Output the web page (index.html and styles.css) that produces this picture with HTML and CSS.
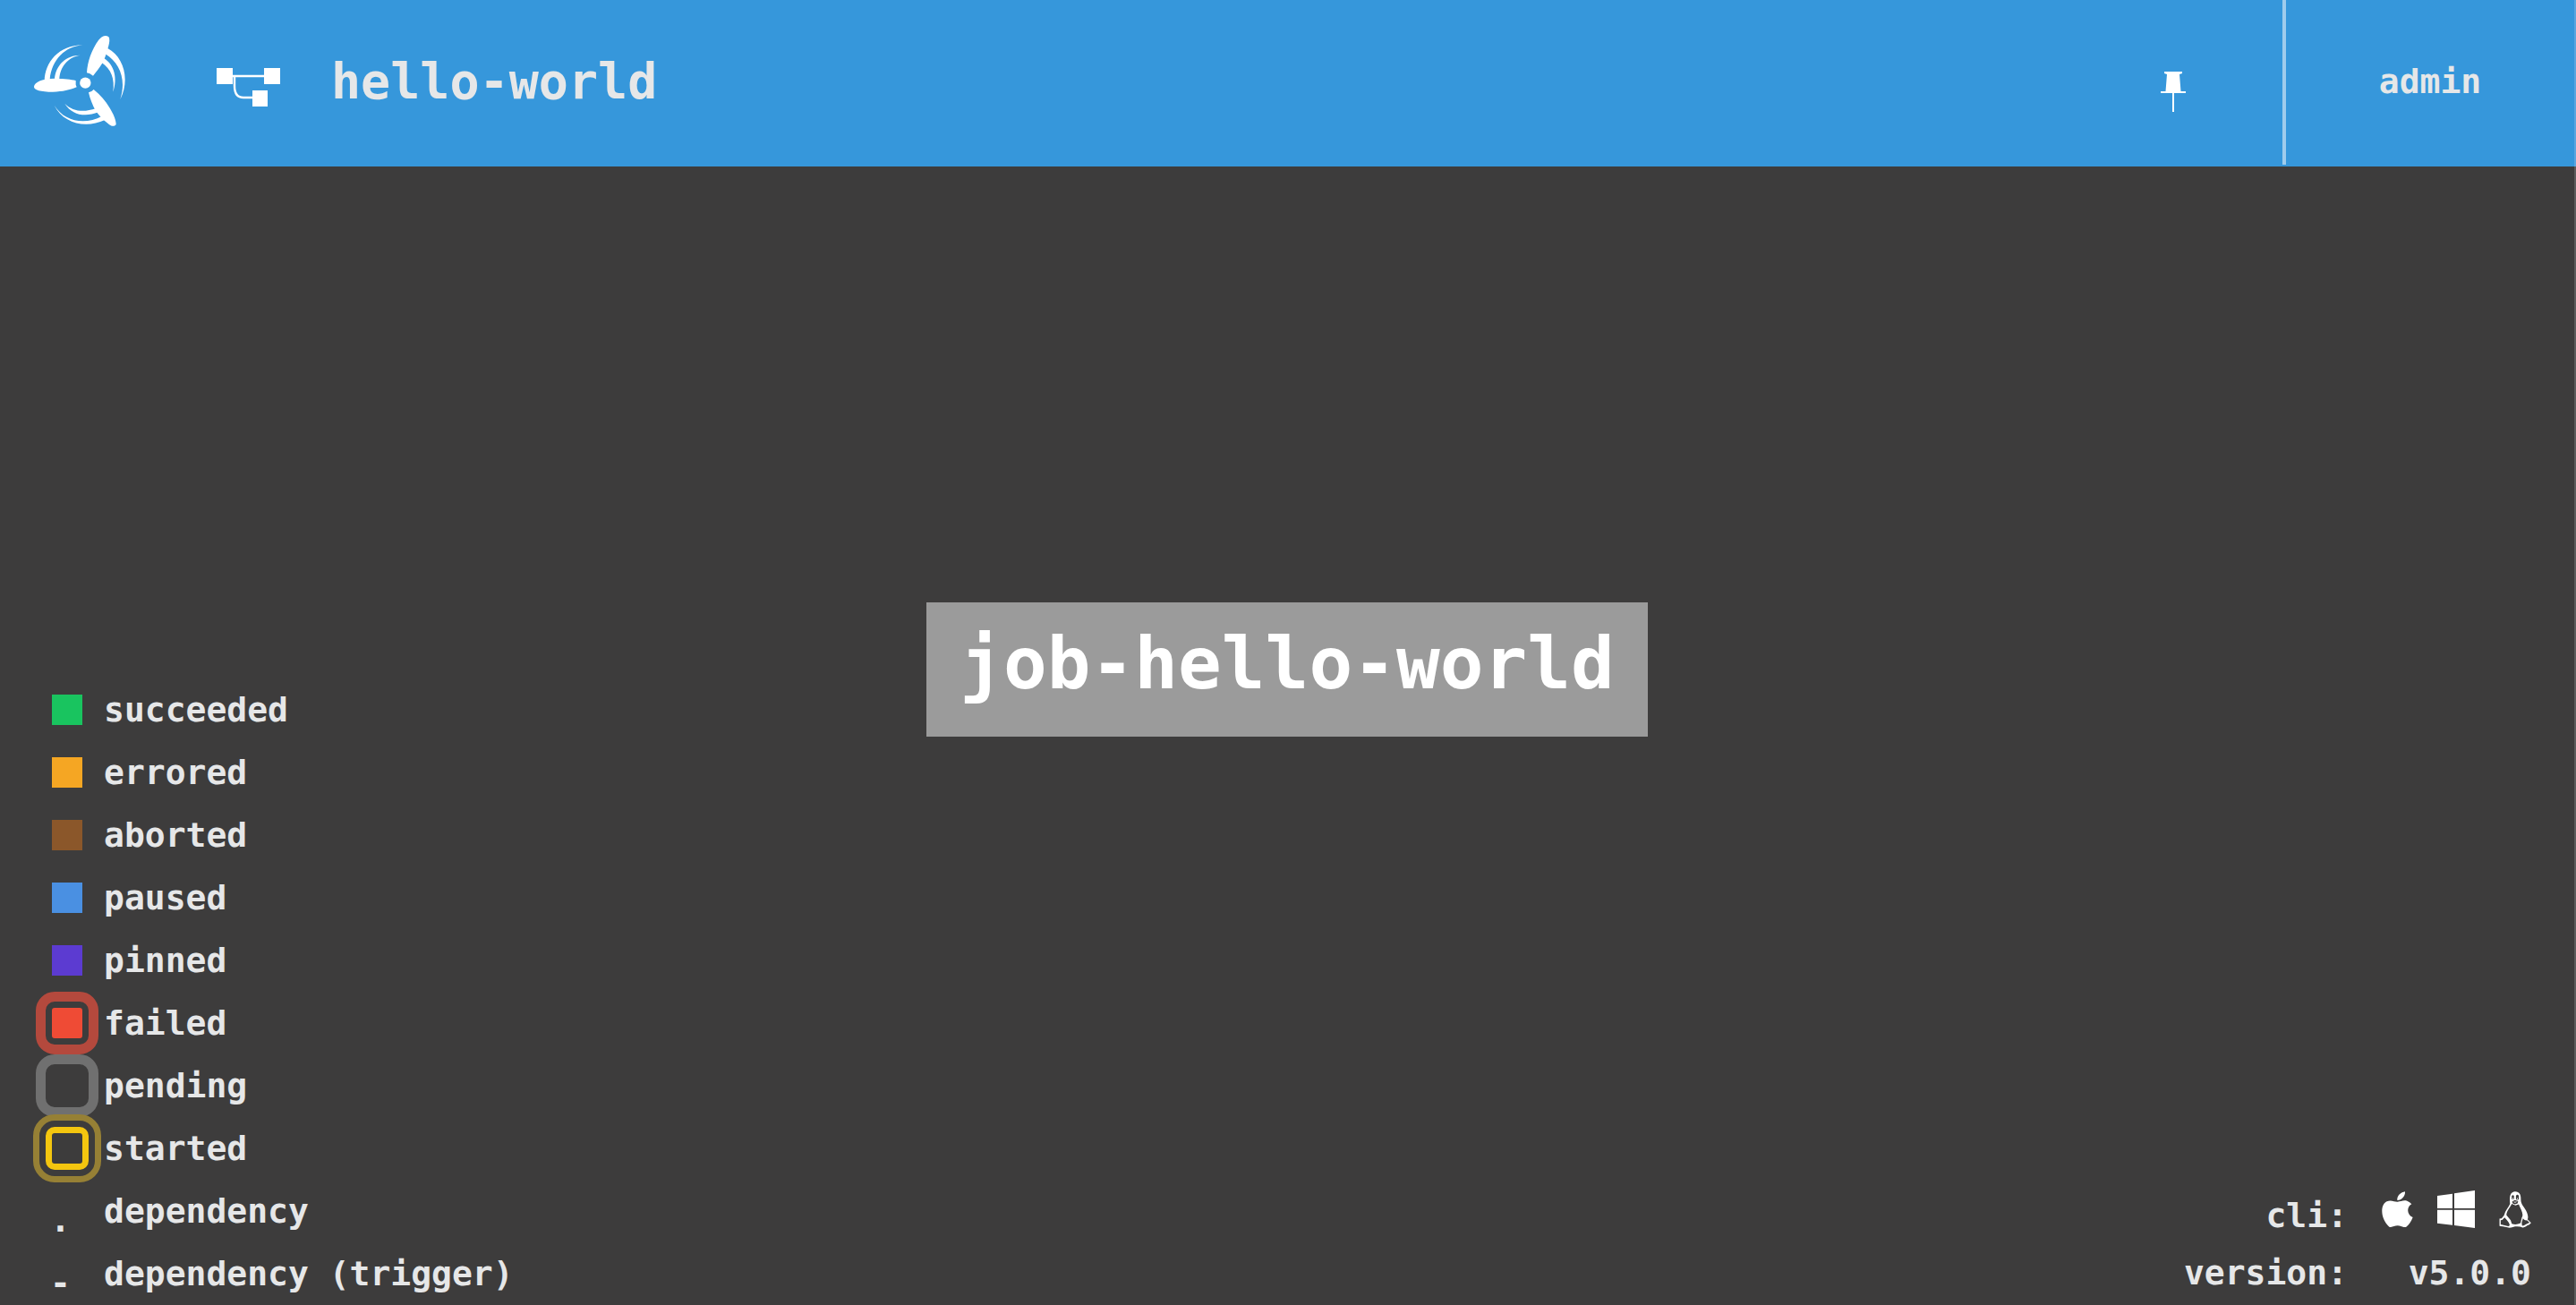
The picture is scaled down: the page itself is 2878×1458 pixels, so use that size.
FILE: index.html
```html
<!DOCTYPE html>
<html lang="en">
<head>
<meta charset="utf-8">
<title>hello-world - Concourse</title>
<link rel="stylesheet" href="styles.css">
</head>
<body>
<header class="topbar">
  <a class="logo" href="#" aria-label="Home">
    <svg viewBox="100 100 330 330" fill="#fff">
      <circle cx="284" cy="276" r="18.500"/>
      <path d="M112 288C113 272 145 260 185 261C215 262 235 264 252 268V282L255 290C230 300 210 305 175 306C135 306 110 299 112 288Z"/>
      <path d="M289 242C291 205 305 165 328 133C339 117 357 113 364 124C367 138 362 150 359 162C354 178 350 193 342 208C330 227 320 240 310 252Q299 243 289 242Z"/>
      <path d="M295 308Q305 306 312 298C335 316 352 337 366 360C378 380 387 399 387 415C383 423 369 422 359 411C343 399 332 387 319 370C308 350 300 330 295 308Z"/>
      <path d="M147 268C149 208 194 149 275 149C217 153 171 198 165 264Z"/>
      <path d="M181 264C184 216 220 183 267 183C226 189 199 222 197 263Z"/>
      <path d="M359 160C412 188 435 263 401 331C422 265 400 209 351 179Z"/>
      <path d="M346 193C383 216 392 262 377 306C383 262 371 229 338 207Z"/>
      <path d="M180 351C213 405 282 418 340 387L350 400C283 431 209 410 180 351Z"/>
      <path d="M215 345C243 373 280 375 320 361L328 374C284 391 240 385 215 345Z"/>
    </svg>
  </a>
  <nav class="crumbs">
    <a class="crumb" href="#">
      <svg class="pipeline-icon" viewBox="0 0 72 44" fill="#fff">
        <path d="M0 0H18V18H0ZM53 0H71V18H53ZM40 25H57V43H40Z"/>
        <path d="M18 9H53M20 9V20Q20 33 30 33H40" fill="none" stroke="#fff" stroke-width="2.400"/>
      </svg>
      <span class="title">hello-world</span>
    </a>
  </nav>
  <button class="pin" type="button" aria-label="Pinned resources">
    <svg viewBox="0 0 28 45" fill="#fff">
      <path d="M4 0H24V2L21 3L22.500 22H28V24H15V45H13V24H0V22H5.500L7 3L4 2Z"/>
    </svg>
  </button>
  <button class="user" type="button">admin</button>
</header>
<main class="stage">
  <div class="graph"><a class="job" href="#">job-hello-world</a></div>
  <div class="foot">
    <dl class="legend">
      <dt><span class="swatch succeeded"></span></dt><dd>succeeded</dd>
      <dt><span class="swatch errored"></span></dt><dd>errored</dd>
      <dt><span class="swatch aborted"></span></dt><dd>aborted</dd>
      <dt><span class="swatch paused"></span></dt><dd>paused</dd>
      <dt><span class="swatch pinned"></span></dt><dd>pinned</dd>
      <dt><span class="swatch ringed failed"></span></dt><dd>failed</dd>
      <dt><span class="swatch ringed pending"></span></dt><dd>pending</dd>
      <dt><span class="swatch ringed started"></span></dt><dd>started</dd>
      <dt class="line">.</dt><dd>dependency</dd>
      <dt class="line">-</dt><dd>dependency (trigger)</dd>
    </dl>
    <dl class="info">
      <dt>cli:</dt>
      <dd class="clis">
        <a href="#" aria-label="macOS"><svg class="apple" viewBox="0 0 105 120" fill="#fff"><path d="M78 1C79 15 68 29 52 30C50 16 63 3 78 1ZM100 43C82 53 84 79 104 87C99 101 91 113 82 119C71 123 65 115 53 115C42 115 35 122 25 119C-4 94-7 45 17 34C31 27 43 36 53 35C64 34 73 28 85 32Q94 35 100 43Z"/></svg></a>
        <a href="#" aria-label="Windows"><svg class="windows" viewBox="0 0 126 126" fill="#fff"><path d="M0 18L51 11V60H0ZM57 10L126 0V60H57ZM0 65H51V116L0 110ZM57 65H126V126L57 117Z"/></svg></a>
        <a href="#" aria-label="Linux"><svg class="linux" viewBox="0 0 106 122"><path fill="#fff" fill-rule="evenodd" d="M53 1C68 1 72 12 72 25C71 45 84 51 92 70C96 80 97 89 94 93L106 105L100 111C90 114 84 123 76 120Q70 116 53 117Q42 121 34 121C24 118 12 117 1 115V91L8 90L16 80C20 64 32 52 36 42C35 28 32 2 53 1ZM42 42C36 55 25 65 24 79L38 96L42 108Q56 113 71 106L75 88C83 76 72 60 65 43L54 47ZM18 87L10 95L5 96L5 110L30 116C39 115 35 105 18 87ZM79 90L75 104L76 114C84 116 89 107 101 104L92 96Q84 98 79 90Z"/><path fill="#3d3c3c" d="M42 20a4 5 0 1 0 7 0a4 5 0 1 0-7 0M56 20a5 6 0 1 0 9 0a5 6 0 1 0-9 0M43 34L52 29L63 33L61 40L52 43L45 40Z"/><path fill="#fff" d="M44 22h3v4h-3zM59 22h3v4h-3zM46 35l15-1l-8 4z"/></svg></a>
      </dd>
      <dt>version:</dt><dd>v5.0.0</dd>
    </dl>
  </div>
</main>
</body>
</html>
```
FILE: styles.css
```css
* { box-sizing: border-box; }
body {
  margin: 0;
  min-height: 100vh;
  display: grid;
  grid-template-rows: auto 1fr;
  background: #3d3c3c;
  color: #e6e7e8;
  font: 700 38px/70px "DejaVu Sans Mono", monospace;
}
a { color: inherit; text-decoration: none; }
svg { display: block; }
dl, dd { margin: 0; }
button {
  padding: 0;
  border: 0;
  background: none;
  color: inherit;
  font: inherit;
}
.topbar {
  display: flex;
  height: 186px;
  border-right: 2px solid #5aa5df;
  background: #3697db;
}
.logo { padding: 34px 0 0 34px; }
.logo svg { width: 110px; height: 110px; }
.crumbs { flex: 1; padding-left: 98px; }
.crumb { display: flex; width: max-content; gap: 56px; }
.pipeline-icon { width: 72px; height: 44px; margin-top: 76px; }
.title { font-size: 55px; line-height: 182px; }
.pin {
  display: flex;
  align-items: center;
  width: 246px;
  padding: 18px 0 0 110px;
}
.pin svg { width: 28px; height: 45px; }
.user {
  width: 326px;
  height: 184px;
  padding-bottom: 2px;
  border-left: 4px solid #a0ccec;
}
.stage { display: grid; border-right: 2px solid #5b5b5b; }
.graph, .foot { grid-area: 1 / 1; }
.graph {
  display: flex;
  align-items: center;
  justify-content: center;
  padding-bottom: 148px;
}
.job {
  padding: 18px 37px 32px;
  background: #9b9b9b;
  color: #fff;
  font-size: 81px;
  line-height: 100px;
}
.foot {
  align-self: end;
  display: flex;
  justify-content: space-between;
  align-items: end;
}
.legend {
  display: grid;
  grid-template-columns: 58px auto;
  grid-auto-rows: 70px;
  padding-left: 58px;
}
.legend dt { display: flex; align-items: center; }
.legend .line {
  align-items: start;
  padding-top: 10px;
  margin-left: -2px;
}
.swatch { width: 34px; height: 34px; }
.succeeded { background: #19c45f; }
.errored { background: #f5a623; }
.aborted { background: #8b572a; }
.paused { background: #4a90e2; }
.pinned { background: #5c3bd1; }
.ringed { position: relative; border-radius: 3px; }
/* halo around the swatch */
.ringed::after {
  content: "";
  position: absolute;
  inset: -18px;
  border: 11px solid;
  border-radius: 21px;
}
.failed { background: #ef4b35; }
.failed::after { border-color: #b4493d; }
.pending::after { border-color: #707070; }
.started {
  width: 48px;
  height: 48px;
  margin-left: -7px;
  border: 7px solid #f4c60f;
  border-radius: 10px;
}
.started::after {
  inset: -21px;
  border-width: 7px;
  border-color: #968035;
  border-radius: 24px;
}
.info {
  display: grid;
  grid-template-columns: auto auto;
  grid-auto-rows: 64px;
  column-gap: 38px;
  padding: 0 48px 4px 0;
  line-height: 64px;
  text-align: right;
}
.clis {
  display: flex;
  justify-content: flex-end;
  align-items: center;
  gap: 27px;
  padding-bottom: 14px;
}
.apple { width: 35px; height: 40px; }
.windows { width: 42px; height: 42px; }
.linux { width: 36px; height: 41px; }
```
